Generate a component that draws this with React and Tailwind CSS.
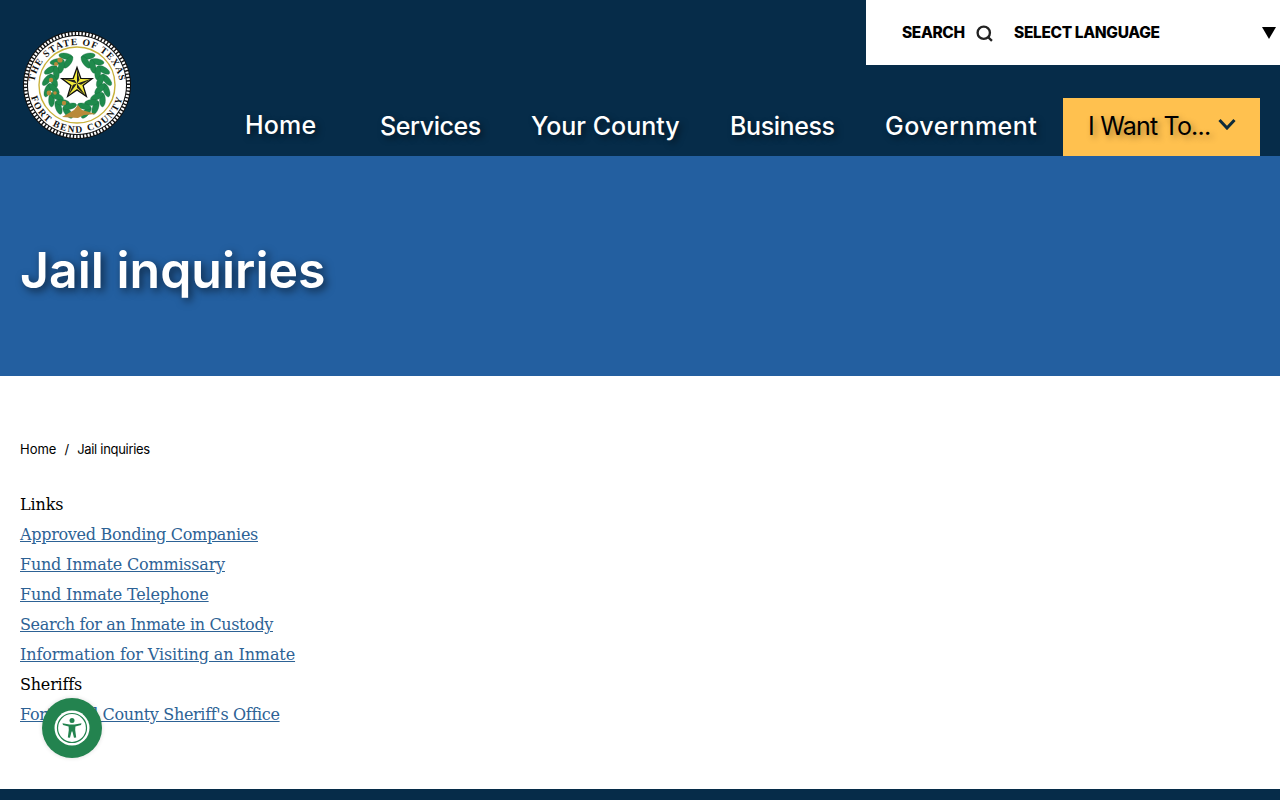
import React from 'react';

const heading = "font-['Inter','Open_Sans',sans-serif]";
const body = "font-['DejaVu_Serif','Liberation_Serif',serif]";

const navItems = [
  { label: 'Services', cls: 'w-[151px] tracking-[-0.4px]' },
  { label: 'Your County', cls: 'w-[199px] tracking-[0px]' },
  { label: 'Business', cls: 'w-[155px] tracking-[-0.4px]' },
  { label: 'Government', cls: 'w-[203px] tracking-[0.5px]' },
];

const links = [
  { text: 'Links', cls: 'tracking-[-0.1px]' },
  { text: 'Approved Bonding Companies', link: true, cls: 'tracking-[-0.3px]' },
  { text: 'Fund Inmate Commissary', link: true, cls: 'tracking-[-0.2px]' },
  { text: 'Fund Inmate Telephone', link: true, cls: 'tracking-[-0.2px]' },
  { text: 'Search for an Inmate in Custody', link: true, cls: 'tracking-[-0.36px]' },
  { text: 'Information for Visiting an Inmate', link: true, cls: 'tracking-[-0.1px]' },
  { text: 'Sheriffs', cls: 'tracking-[-0.2px]' },
  { text: "Fort Bend County Sheriff's Office", link: true, cls: 'tracking-[-0.33px]' },
];

const leftAngles = [-112, -132, -152, -172, -192, -212, -232, -252];
const rightAngles = [-68, -48, -28, -8, 12, 32, 52, 72];

// one pair of leaves at each step round the wreath
const Wreath = ({ angles, flip }) => (
  <g>
    {angles.map((a) => {
      const rad = (a * Math.PI) / 180;
      const rot = a + 90 + (flip ? 180 : 0);
      return [
        [30, 32],
        [23.5, -32],
      ].map(([r, splay]) => {
        const x = 55 + r * Math.cos(rad);
        const y = 54 + r * Math.sin(rad);
        return (
          <ellipse
            key={`${a}-${r}`}
            cx={x}
            cy={y}
            rx="7"
            ry="3"
            fill="#1f8a4c"
            stroke="#14683b"
            strokeWidth="0.3"
            transform={`rotate(${rot + (flip ? splay : -splay)} ${x} ${y})`}
          />
        );
      });
    })}
  </g>
);

// five pointed star, yellow with dark facets
const Star = () => {
  const cx = 55;
  const cy = 53.5;
  const pt = (deg, r) => {
    const rad = ((deg - 90) * Math.PI) / 180;
    return `${cx + r * Math.cos(rad)},${cy + r * Math.sin(rad)}`;
  };
  const points = [0, 72, 144, 216, 288];
  const outline = points.flatMap((d) => [pt(d, 16), pt(d + 36, 6.4)]).join(' ');
  return (
    <g>
      <polygon points={outline} fill="#f4ec3a" stroke="#111" strokeWidth="1.3" />
      {points.map((d) => (
        <polygon key={d} points={`${cx},${cy} ${pt(d, 15)} ${pt(d + 36, 4.2)}`} fill="#222" />
      ))}
    </g>
  );
};

// county seal
const Seal = () => (
  <svg viewBox="0 0 110 110" className="w-[110px] h-[110px]">
    <defs>
      <path id="sealTop" d="M 12 58 A 43 43 0 0 1 98 58" />
      <path id="sealBottom" d="M 7.5 55 A 47.5 47.5 0 0 0 102.5 55" />
    </defs>
    <circle cx="55" cy="55" r="54" fill="#111" />
    <circle cx="55" cy="55" r="51.5" fill="none" stroke="#fff" strokeWidth="3" strokeDasharray="2 1.4" />
    <circle cx="55" cy="55" r="49" fill="#fff" />
    <text fontSize="9.6" fontFamily="'Liberation Serif',serif" fontWeight="700" fill="#111" letterSpacing="1.1">
      <textPath href="#sealTop" startOffset="50%" textAnchor="middle">THE STATE OF TEXAS</textPath>
    </text>
    <text fontSize="9.6" fontFamily="'Liberation Serif',serif" fontWeight="700" fill="#111" letterSpacing="1.6">
      <textPath href="#sealBottom" startOffset="50%" textAnchor="middle">FORT BEND COUNTY</textPath>
    </text>
    <circle cx="55" cy="55" r="38" fill="#fff" stroke="#c9b23c" strokeWidth="1.4" />
    <Wreath angles={leftAngles} flip />
    <Wreath angles={rightAngles} />
    <g fill="#b98a3a">
      <circle cx="38" cy="30" r="2.6" />
      <circle cx="34" cy="34" r="2" />
      <circle cx="29" cy="50" r="2.2" />
      <circle cx="27" cy="63" r="2.4" />
      <circle cx="33" cy="63" r="1.8" />
      <circle cx="42" cy="73" r="2.2" />
      <path d="M40 87 L52 80 L56 75 L60 80 L74 84 L62 85 L56 88 Z" />
    </g>
    <Star />
  </svg>
);

const AccessIcon = () => (
  <svg viewBox="0 0 36 36" className="w-[36px] h-[36px]">
    <circle cx="18" cy="18" r="17.5" fill="#fff" />
    <circle cx="18" cy="18" r="14.5" fill="none" stroke="#23834f" strokeWidth="1.2" />
    <circle cx="18" cy="10.5" r="2.5" fill="#23834f" />
    <path d="M8.5 13.2 L9 15 L14.6 16.4 L14.8 20 L13.8 27.5 L16 27.8 L17.6 21.5 L18.4 21.5 L20 27.8 L22.2 27.5 L21.2 20 L21.4 16.4 L27 15 L27.5 13.2 L20.5 14.4 L15.5 14.4 Z" fill="#23834f" />
  </svg>
);

export default function App() {
  return (
    <div className="relative min-h-[800px] bg-white text-black">
      {/* Header */}
      <header className="flex h-[156px] bg-[#062c49]">
        <div className="w-[245px] shrink-0 pl-[22px] pt-[30px]">
          <Seal />
        </div>
        <div className="flex-1 flex flex-col">
          <div className={`${heading} ml-auto flex items-center h-[65px] w-[414px] bg-white pl-[36px] text-[15.5px] font-extrabold`}>
            <span className="w-[64px] whitespace-nowrap tracking-[-0.4px]">SEARCH</span>
            <svg viewBox="0 0 16 16" className="ml-[10px] w-[17px] h-[17px] mt-[1px]" fill="none" stroke="#222" strokeWidth="2.2">
              <circle cx="7.3" cy="7.3" r="5.8" />
              <path d="M11.5 11.5 L15 15" />
            </svg>
            <span className="ml-[21px] w-[248px] whitespace-nowrap tracking-[-0.35px]">SELECT LANGUAGE</span>
            <span className="w-0 h-0 border-x-[7px] border-x-transparent border-t-[12px] border-t-black" />
          </div>
          <nav className={`${heading} mt-auto flex h-[58px] pr-[20px] text-[25px] font-medium text-white [text-shadow:3px_3px_6px_rgba(0,0,0,0.5)]`}>
            <a className="w-[110px] pt-[9px] whitespace-nowrap tracking-[0.2px]">Home</a>
            {navItems.map((item) => (
              <a key={item.label} className={`${item.cls} pl-[25px] pt-[10px] whitespace-nowrap`}>{item.label}</a>
            ))}
            <a className="flex w-[197px] bg-[#ffc14f] pl-[25px] pt-[10px] font-normal text-black whitespace-nowrap tracking-[-0.8px] [text-shadow:3px_3px_6px_rgba(0,0,0,0.35)]">
              <span className="w-[130px]">I Want To...</span>
              <svg viewBox="0 0 18 12" className="w-[18px] h-[12px] mt-[10px]" fill="none" stroke="#0d2b3a" strokeWidth="3">
                <polyline points="1.5,2 9,10 16.5,2" />
              </svg>
            </a>
          </nav>
        </div>
      </header>

      {/* Title band */}
      <section className="flex items-center h-[220px] bg-[#235fa0] px-[20px] pt-[8px]">
        <h1 className={`${heading} text-[50px] font-semibold text-white [text-shadow:3px_3px_8px_rgba(0,0,0,0.6)]`}>Jail inquiries</h1>
      </section>

      {/* Content */}
      <main className="px-[20px] pt-[64px] pb-[59px]">
        <div className={`${heading} flex items-center h-[18px] pt-[2px] text-[13px] text-black`}>
          <span>Home</span>
          <span className="mx-[8px]">/</span>
          <span className="tracking-[-0.3px]">Jail inquiries</span>
        </div>
        <div className={`${body} mt-[32px] text-[16px] leading-[30px]`}>
          {links.map((row) => (
            <div key={row.text} className={row.cls}>
              {row.link ? <a className="text-[#2d6295] underline">{row.text}</a> : row.text}
            </div>
          ))}
        </div>
      </main>

      <footer className="h-[11px] bg-[#062c49]" />

      {/* Accessibility button */}
      <button className="absolute left-[42px] top-[698px] flex items-center justify-center w-[60px] h-[60px] rounded-full bg-[#23834f] shadow-[0_0_4px_rgba(0,0,0,0.15)]">
        <AccessIcon />
      </button>
    </div>
  );
}
